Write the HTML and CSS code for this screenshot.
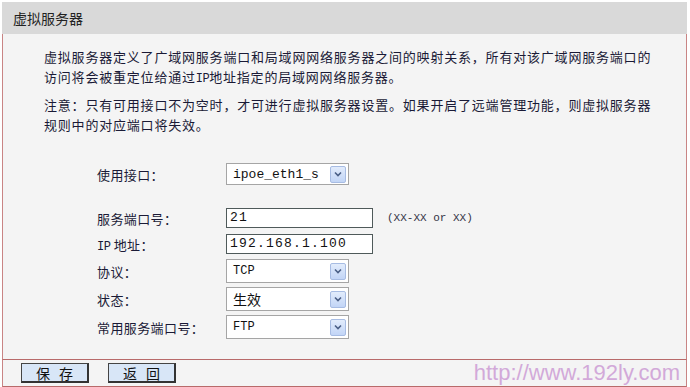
FILE: index.html
```html
<!DOCTYPE html>
<html lang="zh-CN">
<head>
    <meta charset="UTF-8">
    <meta name="viewport" content="width=device-width, initial-scale=1.0">
    <title>虚拟服务器</title>
    <link rel="stylesheet" href="styles.css">
</head>
<body>
    <div class="panel">
        <div class="title">虚拟服务器</div>

        <div class="content">
            <p class="intro">虚拟服务器定义了广域网服务端口和局域网网络服务器之间的映射关系，所有对该广域网服务端口的<br>访问将会被重定位给通过<span class="latin">IP</span>地址指定的局域网网络服务器。</p>
            <p class="intro">注意：只有可用接口不为空时，才可进行虚拟服务器设置。如果开启了远端管理功能，则虚拟服务器<br>规则中的对应端口将失效。</p>

            <div class="form">
                <div class="row row-iface">
                    <label>使用接口：</label>
                    <div class="select select-iface">
                        <span class="value mono">ipoe_eth1_s</span>
                        <span class="arrow"><svg width="8" height="6" viewBox="0 0 8 6"><path d="M1 1.5 L4 4.5 L7 1.5" fill="none" stroke="#4a5f86" stroke-width="1.6"/></svg></span>
                    </div>
                </div>

                <div class="row row-input row-port">
                    <label>服务端口号：</label>
                    <div class="input">21</div>
                    <span class="hint">(XX-XX or XX)</span>
                </div>
                <div class="row row-input">
                    <label><span class="latin">IP</span> 地址：</label>
                    <div class="input">192.168.1.100</div>
                </div>

                <div class="row row-select">
                    <label>协议：</label>
                    <div class="select">
                        <span class="value small">TCP</span>
                        <span class="arrow"><svg width="8" height="6" viewBox="0 0 8 6"><path d="M1 1.5 L4 4.5 L7 1.5" fill="none" stroke="#4a5f86" stroke-width="1.6"/></svg></span>
                    </div>
                </div>
                <div class="row row-select">
                    <label>状态：</label>
                    <div class="select">
                        <span class="value cjk">生效</span>
                        <span class="arrow"><svg width="8" height="6" viewBox="0 0 8 6"><path d="M1 1.5 L4 4.5 L7 1.5" fill="none" stroke="#4a5f86" stroke-width="1.6"/></svg></span>
                    </div>
                </div>
                <div class="row row-select">
                    <label>常用服务端口号：</label>
                    <div class="select">
                        <span class="value small">FTP</span>
                        <span class="arrow"><svg width="8" height="6" viewBox="0 0 8 6"><path d="M1 1.5 L4 4.5 L7 1.5" fill="none" stroke="#4a5f86" stroke-width="1.6"/></svg></span>
                    </div>
                </div>
            </div>
        </div>

        <div class="actions">
            <button class="btn">保 存</button>
            <button class="btn">返 回</button>
            <span class="mark">http://www.192ly.com</span>
        </div>
    </div>
</body>
</html>
```

FILE: styles.css
```css
body {
    margin: 0;
    padding: 0;
    background: #ffffff;
    font-family: "Noto Sans CJK SC", "Liberation Sans", sans-serif;
    font-size: 13px;
    color: #1a1a36;
}
.panel {
    margin: 2px 0 0 2px;
    width: 685px;
}
.title {
    height: 32px;
    line-height: 32px;
    padding-left: 11px;
    background-color: #d9d9d9;
    font-size: 14px;
    color: #222222;
}
.content {
    background-color: #f4f4f4;
    border-left: 1px solid #c98484;
    border-right: 1px solid #c98484;
    border-bottom: 1px solid #b86a6a;
    padding: 13px 0 18px 0;
}
.intro {
    margin: 0 0 6px 0;
    padding-left: 41px;
    line-height: 20px;
    letter-spacing: 0.8px;
}
.latin {
    font-family: "Liberation Mono", monospace;
    font-size: 12px;
    letter-spacing: -0.5px;
}
.form {
    margin-top: 26px;
    padding-left: 94px;
}
.row {
    display: flex;
    align-items: center;
}
.row label {
    width: 129px;
    flex-shrink: 0;
    letter-spacing: 0.4px;
}
.row-iface {
    height: 26px;
    margin-bottom: 18px;
}
.row-input {
    height: 26px;
}
.row-select {
    height: 28px;
}
.input {
    box-sizing: border-box;
    width: 147px;
    height: 20px;
    line-height: 18px;
    padding-left: 3px;
    background: #ffffff;
    border: 1px solid #4f5a5a;
    font-family: "Liberation Mono", monospace;
    font-size: 13px;
    letter-spacing: 1.2px;
    color: #111111;
}
.hint {
    margin-left: 14px;
    font-family: "Liberation Mono", monospace;
    font-size: 11px;
    color: #333344;
}
.select {
    box-sizing: border-box;
    width: 123px;
    height: 24px;
    display: flex;
    align-items: center;
    justify-content: space-between;
    padding: 0 2px 0 6px;
    background: #ffffff;
    border: 1px solid #a5a5a5;
}
.select-iface {
    height: 22px;
}
.value {
    color: #111111;
}
.mono {
    font-family: "Liberation Mono", monospace;
    font-size: 13px;
}
.small {
    font-family: "Liberation Mono", monospace;
    font-size: 12px;
}
.cjk {
    font-size: 14px;
}
.arrow {
    box-sizing: border-box;
    width: 16px;
    height: 17px;
    display: flex;
    align-items: center;
    justify-content: center;
    background: linear-gradient(#e2ecfc, #c2d5f6);
    border: 1px solid #a7bce3;
    border-radius: 2px;
}
.actions {
    height: 26px;
    display: flex;
    align-items: center;
    padding-left: 18px;
    background-color: #f4f4f4;
    border-left: 1px solid #c98484;
    border-right: 1px solid #c98484;
    border-bottom: 1px solid #b86a6a;
}
.btn {
    box-sizing: border-box;
    width: 68px;
    height: 20px;
    margin-right: 19px;
    padding: 0;
    background-color: #d8e6f7;
    border: 1px solid #444444;
    border-right: 2px solid #333333;
    border-bottom: 2px solid #333333;
    font-family: "Noto Sans CJK SC", sans-serif;
    font-size: 14px;
    line-height: 16px;
    word-spacing: 6px;
    color: #111111;
}
.mark {
    margin-left: auto;
    margin-right: 6px;
    font-family: "Liberation Sans", Arial, sans-serif;
    font-size: 22px;
    color: #d2a9d9;
}
```
